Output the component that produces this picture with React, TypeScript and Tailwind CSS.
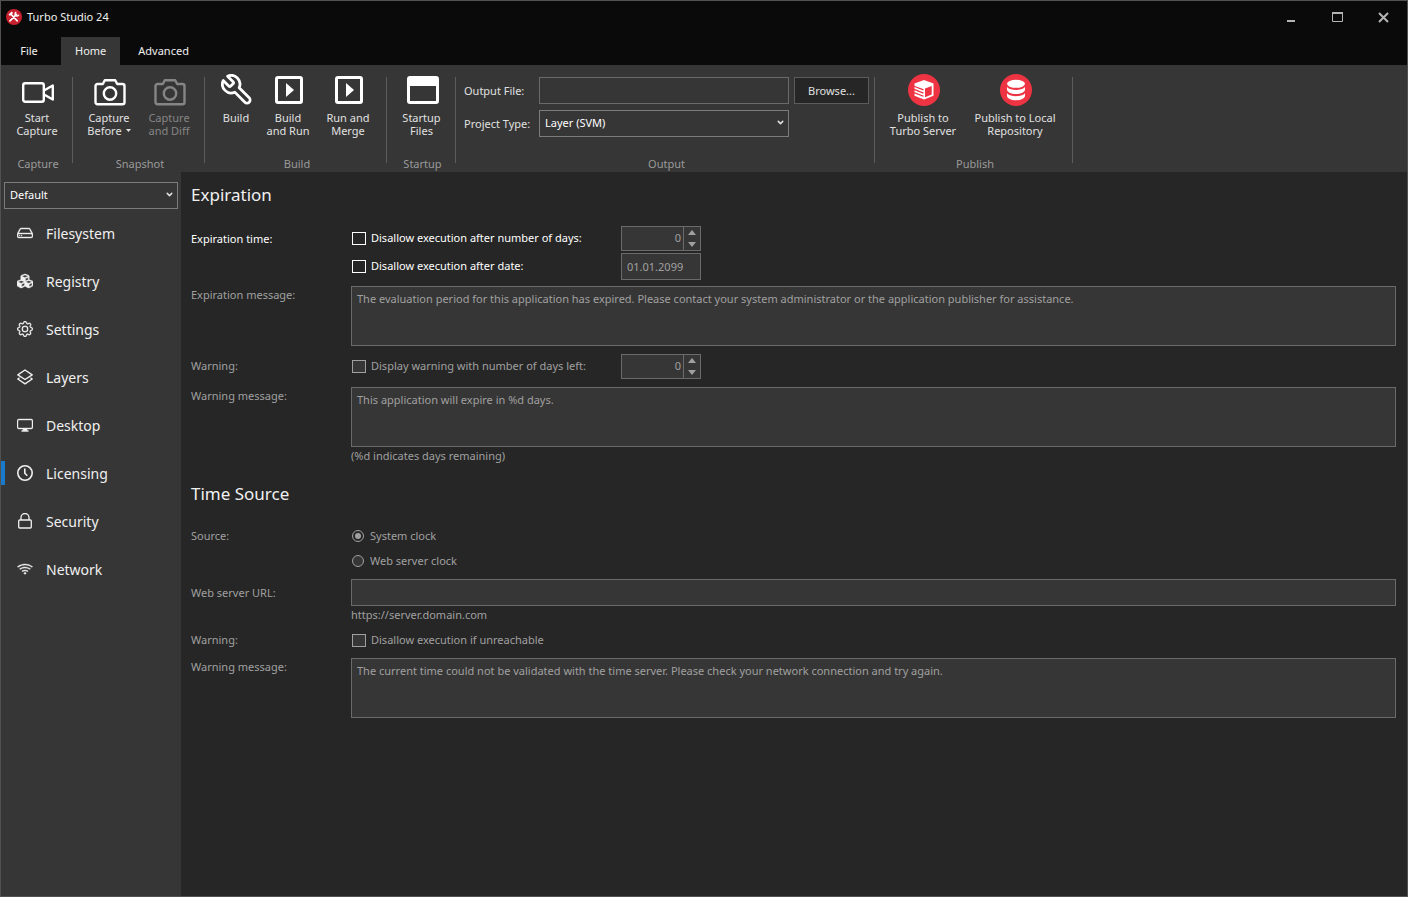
import { useState, type ReactNode } from "react";
import clsx from "clsx";
import { ChevronDown } from "lucide-react";
import { FaCubes } from "react-icons/fa";
import { BsDisplay, BsGear, BsHdd, BsWifi } from "react-icons/bs";

/* ---------- Ribbon icons ---------- */

function VideoIcon() {
  return (
    <svg width="32" height="32" viewBox="0 0 32 32" fill="none" stroke="currentColor" strokeWidth="2.4" strokeLinejoin="round">
      <rect x="1.2" y="9.2" width="20.6" height="18.600" rx="2" />
      <path d="M22 16.500l8.800-5v14l-8.800-5" />
    </svg>
  );
}

function CameraIcon() {
  return (
    <svg width="32" height="32" viewBox="0 0 32 32" fill="none" stroke="currentColor" strokeWidth="2.4" strokeLinejoin="round">
      <path d="M3.500 10h5.300l2-3.800h10.400l2 3.800h5.300a2 2 0 0 1 2 2v16.200a2 2 0 0 1-2 2h-25a2 2 0 0 1-2-2V12a2 2 0 0 1 2-2z" />
      <circle cx="16" cy="19.500" r="6.200" />
    </svg>
  );
}

function WrenchIcon() {
  return (
    <svg width="32" height="32" viewBox="1 1 22 22" fill="none" stroke="currentColor" strokeWidth="1.900" strokeLinejoin="round" strokeLinecap="round">
      <path
        transform="matrix(-1 0 0 1 24 0)"
        d="M14.700 6.300a1 1 0 0 0 0 1.400l1.600 1.600a1 1 0 0 0 1.400 0l3.770-3.770a6 6 0 0 1-7.940 7.940l-6.910 6.910a2.120 2.120 0 0 1-3-3l6.910-6.910a6 6 0 0 1 7.940-7.940l-3.760 3.760z"
      />
    </svg>
  );
}

function PlayBoxIcon() {
  return (
    <svg width="32" height="32" viewBox="0 0 32 32" fill="none">
      <rect x="3.500" y="3.500" width="25" height="25" rx="1.500" stroke="currentColor" strokeWidth="3" />
      <path d="M13 9l8 7-8 7z" fill="currentColor" />
    </svg>
  );
}

function WindowIcon() {
  return (
    <svg width="32" height="32" viewBox="0 0 32 32" fill="none">
      <rect x="1.500" y="3.500" width="29" height="25" rx="1.500" stroke="currentColor" strokeWidth="3" />
      <path d="M1 4h30v8H1z" fill="currentColor" />
    </svg>
  );
}

function ServerPublishIcon() {
  return (
    <svg width="32" height="32" viewBox="0 0 32 32">
      <circle cx="16" cy="16" r="16" fill="#ee3342" />
      <path d="M16 6l9.500 3.500v12.200L16 25.500l-9.500-3.800V9.500z" fill="#fff" />
      <path d="M17 14.600l6.700-2.500v8.400L17 23.200z" fill="#ee3342" />
      <path d="M6 12.200l9.500 3.700M6 15.400l9.500 3.700M6 18.600l9.500 3.700" stroke="#ee3342" strokeWidth="1.200" />
    </svg>
  );
}

function RepositoryIcon() {
  return (
    <svg width="32" height="32" viewBox="0 0 32 32">
      <circle cx="16" cy="16" r="16" fill="#ee3342" />
      <ellipse cx="16" cy="9.800" rx="9" ry="4" fill="#fff" />
      <path d="M7 13c2 2.300 5.500 3 9 3s7-.7 9-3v2.500c0 2.700-4 4.500-9 4.500s-9-1.800-9-4.500z" fill="#fff" />
      <path d="M7 19.200c2 2.300 5.500 3 9 3s7-.7 9-3v2.500c0 2.700-4 4.500-9 4.500s-9-1.800-9-4.500z" fill="#fff" />
    </svg>
  );
}

function AppLogo() {
  return (
    <svg width="16" height="16" viewBox="0 0 16 16">
      <circle cx="8" cy="8" r="8" fill="#c8202f" />
      <path d="M5.200 5.500l6 6.300M4 11.800l6.500-6.500" stroke="#fff" strokeWidth="1.700" strokeLinecap="round" />
      <path d="M3.200 6.200l3.200-3" stroke="#fff" strokeWidth="2" />
      <path d="M10.300 3.200a2 2 0 1 0 2.600 2.600" fill="none" stroke="#fff" strokeWidth="1.400" />
    </svg>
  );
}

/* ---------- Sidebar icons ---------- */

function LayersIcon() {
  return (
    <svg width="16" height="16" viewBox="0 0 16 16" fill="none" stroke="currentColor" strokeWidth="1.400" strokeLinejoin="round">
      <path d="M8 1l7.200 4.800L8 10.500.8 5.800z" />
      <path d="M2.500 8.800L.8 10 8 14.800l7.200-4.800-1.700-1.200" />
    </svg>
  );
}

function ClockIcon() {
  return (
    <svg width="16" height="16" viewBox="0 0 16 16" fill="none" stroke="currentColor" strokeWidth="1.600">
      <circle cx="8" cy="8" r="7.200" />
      <path d="M7.800 3.500v4.700l2.500 2.500" />
    </svg>
  );
}

function LockIcon() {
  return (
    <svg width="16" height="16" viewBox="0 0 16 16" fill="none" stroke="currentColor" strokeWidth="1.300">
      <rect x="1.700" y="7" width="12.600" height="8" rx="1" />
      <path d="M4 7V4.500a4 4 0 0 1 8 0V7" />
    </svg>
  );
}

const navItems = [
  { label: "Filesystem", icon: <BsHdd size={16} strokeWidth="0.4" /> },
  { label: "Registry", icon: <FaCubes size={16} strokeWidth="12" /> },
  { label: "Settings", icon: <BsGear size={16} strokeWidth="0.3" /> },
  { label: "Layers", icon: <LayersIcon /> },
  { label: "Desktop", icon: <BsDisplay size={16} strokeWidth="0.4" /> },
  { label: "Licensing", icon: <ClockIcon /> },
  { label: "Security", icon: <LockIcon /> },
  { label: "Network", icon: <BsWifi size={16} strokeWidth="0.4" /> },
];

const fieldStyle = "border border-[#6a6a6a] bg-[#363636] outline-none";

/* ---------- Title bar and tabs ---------- */

function TitleBar() {
  return (
    <header className="flex h-9 items-center justify-between pl-[5px] pr-4 text-[#b4b4b4]">
      <div className="flex items-center gap-[5px] pb-1">
        <AppLogo />
        <h1 className="text-[11px] leading-4 text-[#f0f0f0]">Turbo Studio 24</h1>
      </div>
      <div className="flex gap-[30px] pb-1">
        <button type="button" aria-label="Minimize" className="flex size-4 items-center justify-center">
          <svg width="16" height="16" viewBox="0 0 16 16"><path d="M4 11h8v2H4z" fill="currentColor" /></svg>
        </button>
        <button type="button" aria-label="Maximize" className="flex size-4 items-center justify-center">
          <svg width="16" height="16" viewBox="0 0 16 16" fill="none" stroke="currentColor">
            <path d="M3.500 4v8.500h10V4" />
            <path d="M3 4h11" strokeWidth="2" />
          </svg>
        </button>
        <button type="button" aria-label="Close" className="flex size-4 items-center justify-center">
          <svg width="16" height="16" viewBox="0 0 16 16"><path d="M4 4l9 9M13 4l-9 9" stroke="currentColor" strokeWidth="2" /></svg>
        </button>
      </div>
    </header>
  );
}

function TabBar() {
  const tabs = ["File", "Home", "Advanced"];
  const [active, setActive] = useState("Home");
  return (
    <nav className="flex h-7 gap-1">
      {tabs.map((tab) => (
        <button
          key={tab}
          type="button"
          onClick={() => setActive(tab)}
          className={clsx(
            "min-w-14 px-[14px] text-[11px] text-[#f0f0f0]",
            active === tab && "bg-[#363636]",
          )}
        >
          {tab}
        </button>
      ))}
    </nav>
  );
}

/* ---------- Ribbon ---------- */

function RibbonGroup({ title, width, children }: { title: string; width: string; children: ReactNode }) {
  return (
    <>
      <section aria-label={title} className={clsx("flex shrink-0 flex-col justify-between", width)}>
        <div className="flex justify-center pl-px">{children}</div>
        <p className="pl-[3px] text-center text-[11px] leading-4 text-[#9a9a9a]">{title}</p>
      </section>
      <div className="mt-[3px] h-[86px] w-px shrink-0 bg-[#5c5c5c]" />
    </>
  );
}

function RibbonButton({
  icon,
  lines,
  width,
  disabled = false,
  menu = false,
}: {
  icon: ReactNode;
  lines: string[];
  width: string;
  disabled?: boolean;
  menu?: boolean;
}) {
  return (
    <button
      type="button"
      disabled={disabled}
      className={clsx(
        "flex flex-col items-center gap-[5px] text-[11px] leading-[13px]",
        disabled ? "text-[#858585]" : "text-[#e0e0e0]",
        width,
      )}
    >
      <span className={clsx("pl-[2px]", disabled ? "text-[#858585]" : "text-white")}>{icon}</span>
      <span className="flex flex-col items-center whitespace-nowrap">
        {lines.map((line, i) => (
          <span key={line} className="flex items-center gap-1">
            {line}
            {menu && i === lines.length - 1 && (
              <svg width="5" height="3" viewBox="0 0 5 3"><path d="M0 0h5L2.500 3z" fill="currentColor" /></svg>
            )}
          </span>
        ))}
      </span>
    </button>
  );
}

function Dropdown({ id, label, value, className }: { id: string; label?: string; value: string; className?: string }) {
  return (
    <div className={clsx("relative", className)}>
      <select
        id={id}
        aria-label={label}
        className="block h-[27px] w-full appearance-none border border-[#7c7c7c] bg-[#363636] px-[5px] text-[11px] text-white outline-none"
      >
        <option>{value}</option>
      </select>
      <ChevronDown size={9} strokeWidth={4} className="pointer-events-none absolute right-1 top-2 text-[#e0e0e0]" />
    </div>
  );
}

function Ribbon() {
  return (
    <div className="flex h-[107px] overflow-hidden bg-[#363636] pt-[9px]">
      <RibbonGroup title="Capture" width="w-[71px]">
        <RibbonButton width="w-[60px]" icon={<VideoIcon />} lines={["Start", "Capture"]} />
      </RibbonGroup>
      <RibbonGroup title="Snapshot" width="w-[131px]">
        <RibbonButton width="w-[60px]" icon={<CameraIcon />} lines={["Capture", "Before"]} menu />
        <RibbonButton width="w-[60px]" icon={<CameraIcon />} lines={["Capture", "and Diff"]} disabled />
      </RibbonGroup>
      <RibbonGroup title="Build" width="w-[181px]">
        <RibbonButton width="w-[50px]" icon={<WrenchIcon />} lines={["Build"]} />
        <RibbonButton width="w-[54px]" icon={<PlayBoxIcon />} lines={["Build", "and Run"]} />
        <RibbonButton width="w-[66px]" icon={<PlayBoxIcon />} lines={["Run and", "Merge"]} />
      </RibbonGroup>
      <RibbonGroup title="Startup" width="w-[68px]">
        <RibbonButton width="w-[60px]" icon={<WindowIcon />} lines={["Startup", "Files"]} />
      </RibbonGroup>
      <RibbonGroup title="Output" width="w-[418px]">
        <div className="grid grid-cols-[70px_250px_75px] items-center gap-x-[5px] gap-y-[6px] pl-[2px] pt-[3px] text-[11px] text-[#e0e0e0]">
          <label htmlFor="output-file" className="pt-[2px]">Output File:</label>
          <input id="output-file" type="text" className="h-[27px] border border-[#6a6a6a] bg-[#363636] px-[5px] outline-none" />
          <button type="button" className="h-[27px] border border-[#5c5c5c] bg-[#262626] pt-[2px]">
            Browse...
          </button>
          <label htmlFor="project-type" className="whitespace-nowrap pt-[2px]">Project Type:</label>
          <Dropdown id="project-type" value="Layer (SVM)" />
        </div>
      </RibbonGroup>
      <RibbonGroup title="Publish" width="w-[197px]">
        <RibbonButton width="w-[82px]" icon={<ServerPublishIcon />} lines={["Publish to", "Turbo Server"]} />
        <RibbonButton width="w-[102px]" icon={<RepositoryIcon />} lines={["Publish to Local", "Repository"]} />
      </RibbonGroup>
    </div>
  );
}

/* ---------- Sidebar ---------- */

function Sidebar() {
  const [active, setActive] = useState("Licensing");
  return (
    <aside className="w-[180px] shrink-0 bg-[#363636] pt-[10px]">
      <Dropdown id="profile" label="Profile" value="Default" className="mx-[3px]" />
      <nav className="flex flex-col">
        {navItems.map(({ label, icon }) => (
          <button
            key={label}
            type="button"
            onClick={() => setActive(label)}
            className="flex h-12 items-center text-[14px] text-[#f0f0f0]"
          >
            <span className={clsx("h-6 w-1", active === label && "bg-[#1979ca]")} />
            <span className="ml-3 mr-[13px]">{icon}</span>
            {label}
          </button>
        ))}
      </nav>
    </aside>
  );
}

/* ---------- Licensing form ---------- */

function Check({ id, label, dim = false }: { id: string; label: string; dim?: boolean }) {
  return (
    <label htmlFor={id} className="flex w-[270px] items-center gap-[5px] whitespace-nowrap">
      <input
        id={id}
        type="checkbox"
        disabled={dim}
        className={clsx(
          "ml-px h-[13px] w-[14px] appearance-none border checked:bg-[#1979ca]",
          dim ? "border-[#a0a0a0] bg-[#363636]" : "border-white bg-[#262626]",
        )}
      />
      {label}
    </label>
  );
}

function Radio({ id, label, checked = false }: { id: string; label: string; checked?: boolean }) {
  return (
    <label htmlFor={id} className="flex h-5 items-center gap-[6px]">
      <input
        id={id}
        type="radio"
        name="time-source"
        defaultChecked={checked}
        disabled
        className="ml-px size-3 appearance-none rounded-full border border-[#a0a0a0] bg-[#363636] checked:bg-[#a0a0a0] checked:bg-clip-content checked:p-[2px]"
      />
      {label}
    </label>
  );
}

function Spinner({ label }: { label: string }) {
  return (
    <div className={clsx("flex h-[25px] w-20 text-[#a0a0a0]", fieldStyle)}>
      <input type="text" aria-label={label} defaultValue="0" disabled className="w-0 flex-1 pr-[2px] text-right" />
      <div className="flex w-[17px] flex-col border-l border-[#6a6a6a]">
        <button type="button" aria-label={`Increase ${label}`} className="flex flex-1 items-center justify-center">
          <svg width="8" height="5" viewBox="0 0 8 5"><path d="M0 5h8L4 0z" fill="currentColor" /></svg>
        </button>
        <button type="button" aria-label={`Decrease ${label}`} className="flex flex-1 items-center justify-center">
          <svg width="8" height="5" viewBox="0 0 8 5"><path d="M0 0h8L4 5z" fill="currentColor" /></svg>
        </button>
      </div>
    </div>
  );
}

function Message({ id, label, value, hint }: { id: string; label: string; value: string; hint?: string }) {
  return (
    <div className="flex">
      <label htmlFor={id} className="w-40 shrink-0 leading-[18px]">{label}</label>
      <div className="min-w-0 flex-1">
        <textarea
          id={id}
          disabled
          defaultValue={value}
          className={clsx("block h-[60px] w-full resize-none px-[5px] py-1 leading-4", fieldStyle)}
        />
        {hint && <p className="leading-[18px]">{hint}</p>}
      </div>
    </div>
  );
}

function LicensingForm() {
  return (
    <main className="min-w-0 flex-1 bg-[#262626] pb-10 pl-[10px] pr-[11px] pt-[10px] text-[11px] text-[#a0a0a0]">
      <h2 className="mb-[18px] text-[17px] leading-[26px] text-[#f0f0f0]">Expiration</h2>

      <div className="mb-[6px] flex text-white">
        <p className="w-40 shrink-0 leading-[25px]">Expiration time:</p>
        <div className="flex flex-col gap-[2px]">
          <div className="flex items-center">
            <Check id="after-days" label="Disallow execution after number of days:" />
            <Spinner label="days until expiration" />
          </div>
          <div className="flex items-center">
            <Check id="after-date" label="Disallow execution after date:" />
            <input
              type="text"
              aria-label="Expiration date"
              defaultValue="01.01.2099"
              disabled
              className={clsx("h-[27px] w-20 px-[5px] text-[#a0a0a0]", fieldStyle)}
            />
          </div>
        </div>
      </div>
      <Message
        id="expiration-message"
        label="Expiration message:"
        value="The evaluation period for this application has expired. Please contact your system administrator or the application publisher for assistance."
      />
      <div className="my-2 flex items-center">
        <p className="w-40 shrink-0">Warning:</p>
        <Check id="days-left" label="Display warning with number of days left:" dim />
        <Spinner label="days left before warning" />
      </div>
      <Message
        id="warning-message"
        label="Warning message:"
        value="This application will expire in %d days."
        hint="(%d indicates days remaining)"
      />

      <h2 className="mb-[18px] mt-4 text-[17px] leading-[26px] text-[#f0f0f0]">Time Source</h2>

      <div className="mb-2 flex pt-px">
        <p className="w-40 shrink-0 leading-5">Source:</p>
        <div className="flex flex-col gap-[5px]">
          <Radio id="system-clock" label="System clock" checked />
          <Radio id="web-clock" label="Web server clock" />
        </div>
      </div>
      <div className="flex">
        <label htmlFor="server-url" className="w-40 shrink-0 leading-[27px]">Web server URL:</label>
        <div className="min-w-0 flex-1">
          <input id="server-url" type="text" disabled className={clsx("block h-[27px] w-full px-[5px]", fieldStyle)} />
          <p className="leading-[18px]">https://server.domain.com</p>
        </div>
      </div>
      <div className="mb-2 mt-[6px] flex h-5 items-center">
        <p className="w-40 shrink-0">Warning:</p>
        <Check id="unreachable" label="Disallow execution if unreachable" dim />
      </div>
      <Message
        id="time-message"
        label="Warning message:"
        value="The current time could not be validated with the time server. Please check your network connection and try again."
      />
    </main>
  );
}

export default function App() {
  return (
    <div className="flex min-h-screen flex-col border border-[#505250] bg-[#0a0a0a] font-['Noto_Sans','Open_Sans',sans-serif]">
      <TitleBar />
      <TabBar />
      <Ribbon />
      <div className="flex flex-1">
        <Sidebar />
        <LicensingForm />
      </div>
    </div>
  );
}
